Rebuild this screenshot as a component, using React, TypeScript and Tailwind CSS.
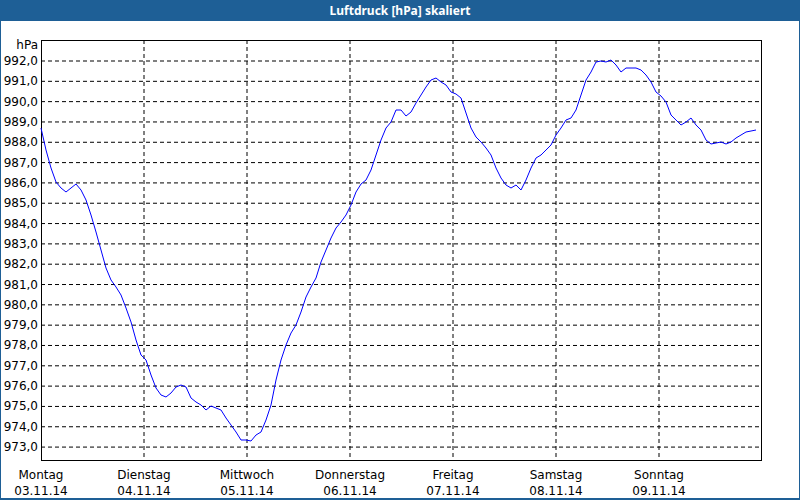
const values = [973, 974, 975, 976, 977, 978, 979, 980, 981, 982, 983, 984, 985, 986, 987, 988, 989, 990, 991, 992]
const days = [
	['Montag', '03.11.14'],
	['Dienstag', '04.11.14'],
	['Mittwoch', '05.11.14'],
	['Donnerstag', '06.11.14'],
	['Freitag', '07.11.14'],
	['Samstag', '08.11.14'],
	['Sonntag', '09.11.14'],
]

// y pixels sampled every 5px from x=40
const ys = [128,150,168,182,188,192,188,184,190,200,215,232,250,268,280,287,295,308,322,340,355,360,375,388,395,397,393,387,385,387,398,402,405,410,406,408,410,418,425,432,440,440,441,435,432,420,405,380,360,345,333,325,312,297,287,278,262,250,238,228,222,215,205,192,184,180,170,155,140,128,122,110,110,116,112,103,95,87,80,78,82,85,92,94,98,113,128,137,142,148,155,168,178,185,188,185,190,180,168,158,155,150,145,135,128,120,118,110,95,80,72,62,61,62,60,65,72,68,68,68,70,75,82,92,96,102,115,120,125,122,118,125,130,140,144,143,142,144,142,138,135,132,131,130]

const yOf = (v: number) => 61 + (992 - v) * 20.32

export default function App() {
	const points = ys.map((y, i) => `${40 + i * 5},${y}`).join(' ')
	return (
		<div className="flex h-[500px] w-[800px] flex-col bg-[#1e5f96] font-['Tahoma','DejaVu_Sans',sans-serif] text-[12px]">
			<div className="flex h-[21px] items-center justify-center font-bold text-white">Luftdruck [hPa] skaliert</div>
			<div className="relative mb-[2px] ml-[1px] mr-[1px] flex-1 bg-white">
				<svg width="798" height="477" viewBox="0 21 798 477" className="block" fontFamily="Tahoma, 'DejaVu Sans', sans-serif" fontSize="12">
					{values.map(v => (
						<g key={v}>
							<line x1={40} x2={760} y1={yOf(v)} y2={yOf(v)} stroke="#000" strokeDasharray="4 3" />
							<text x={37} y={yOf(v) + 4} textAnchor="end" fill="#000">{v},0</text>
						</g>
					))}
					<text x={37} y={49} textAnchor="end" fill="#000">hPa</text>
					{days.map(([d, date], i) => (
						<g key={d}>
							{i > 0 && <line x1={40 + i * 103} x2={40 + i * 103} y1={40} y2={461} stroke="#000" strokeDasharray="4 3" />}
							<text x={40 + i * 103} y={479} textAnchor="middle" fill="#000">{d}</text>
							<text x={40 + i * 103} y={495} textAnchor="middle" fill="#000">{date}</text>
						</g>
					))}
					<rect x={40.5} y={40.5} width={720} height={420} fill="none" stroke="#000" />
					<polyline points={points} fill="none" stroke="#0000ff" strokeWidth={1} />
				</svg>
			</div>
		</div>
	)
}
